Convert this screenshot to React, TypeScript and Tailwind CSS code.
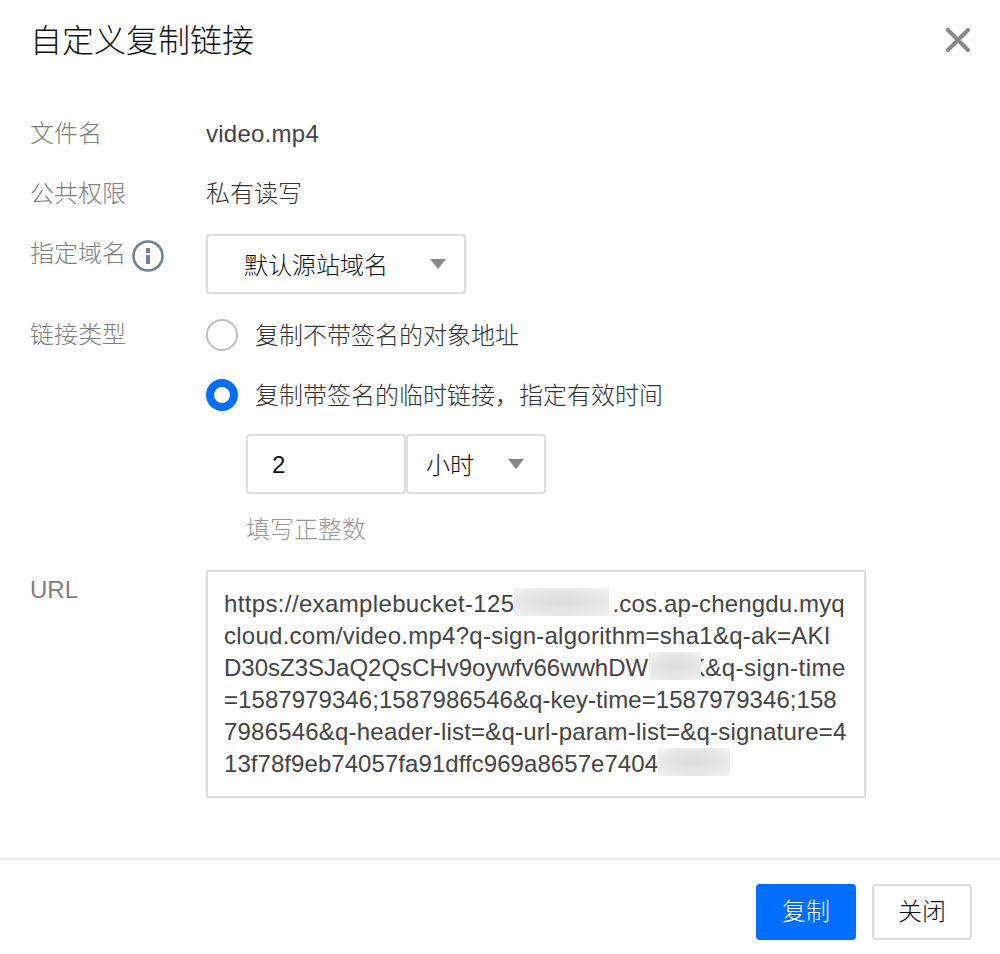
const FONT = "font-['Liberation_Sans','Noto_Sans_CJK_SC',sans-serif]";

function Caret() {
  return (
    <svg width="16" height="10" viewBox="0 0 16 10" className="shrink-0">
      <path d="M0 0h16L8 10z" fill="#888888" />
    </svg>
  );
}

function Row({ label, top, children }: { label: React.ReactNode; top: string; children: React.ReactNode }) {
  return (
    <div className={`flex items-start pl-[30px] ${top}`}>
      <div className="w-[176px] shrink-0 h-[32px] flex items-center text-[#808080]">{label}</div>
      <div className="flex-1 min-w-0">{children}</div>
    </div>
  );
}

function Radio({ checked, children }: { checked?: boolean; children: React.ReactNode }) {
  return (
    <div className="flex items-center h-[32px] text-[#333333]">
      {checked ? (
        <span className="w-[32px] h-[32px] rounded-full border-[8px] border-[#006eff] bg-white" />
      ) : (
        <span className="w-[32px] h-[32px] rounded-full border-2 border-[#bfbfbf] bg-white" />
      )}
      <span className="ml-[17px] pt-[1px]">{children}</span>
    </div>
  );
}

// the redacted parts of the url are blurred in the screenshot
function Smudge({ className }: { className: string }) {
  return (
    <span
      className={`absolute bg-[radial-gradient(ellipse_at_center,#dcdcdc_0%,#e6e6e6_55%,#f3f3f3_100%)] ${className}`}
    />
  );
}

export default function App() {
  return (
    <div className={`w-[1000px] h-[954px] bg-white flex flex-col text-[24px] leading-[32px] font-light ${FONT}`}>
      {/* header */}
      <div className="h-[80px] pl-[30px] pr-[30px] flex items-center justify-between shrink-0">
        <div className="text-[32px] leading-[40px] pt-[2px] text-[#111111]">自定义复制链接</div>
        <svg width="24" height="24" viewBox="0 0 24 24">
          <path d="M2 2l20 20M22 2L2 22" stroke="#888888" strokeWidth="4" strokeLinecap="round" />
        </svg>
      </div>

      {/* form */}
      <div className="flex-1">
        <Row label="文件名" top="pt-[38px]">
          <div className="text-[#444444] tracking-[0.25px]">video.mp4</div>
        </Row>
        <Row label="公共权限" top="pt-[28px]">
          <div className="text-[#333333]">私有读写</div>
        </Row>
        <Row
          label={
            <span className="flex items-center">
              指定域名
              <svg width="32" height="32" viewBox="0 0 32 32" className="ml-[6px] mt-[3px]">
                <circle cx="16" cy="16" r="14.5" fill="none" stroke="#6f8199" strokeWidth="2.5" />
                <rect x="14" y="8" width="4" height="5" fill="#6f8199" />
                <rect x="14" y="15" width="4" height="9" fill="#6f8199" />
              </svg>
            </span>
          }
          top="pt-[28px]"
        >
          <div className="-mt-[4px] w-[260px] h-[60px] border-2 border-[#dddddd] rounded-[4px] flex items-center justify-between pl-[36px] pr-[18px] text-[#111111]">
            <span className="pt-[4px]">默认源站域名</span>
            <Caret />
          </div>
        </Row>
        <Row label="链接类型" top="pt-[25px]">
          <Radio>复制不带签名的对象地址</Radio>
          <div className="mt-[28px]">
            <Radio checked>复制带签名的临时链接，指定有效时间</Radio>
          </div>
          <div className="mt-[23px] ml-[40px] flex">
            <div className="w-[160px] h-[60px] border-2 border-[#dde1e6] rounded-[4px] flex items-center pl-[24px] pt-[1px] text-[#111111]">
              2
            </div>
            <div className="w-[140px] h-[60px] border-2 border-[#dde1e6] rounded-[4px] flex items-center justify-between pl-[18px] pr-[20px] text-[#111111]">
              <span className="pt-[4px]">小时</span>
              <Caret />
            </div>
          </div>
          <div className="mt-[20px] ml-[40px] text-[#999999]">填写正整数</div>
        </Row>
        <Row label="URL" top="pt-[28px]">
          <div className="-mt-[4px] w-[660px] h-[228px] border-2 border-[#dddddd] pl-[16px] pt-[16px] text-[#444444] whitespace-nowrap">
            <div className="relative">
              <span className="tracking-[0.36px]">https://examplebucket-125</span>
              <span className="inline-block w-[98px]" />
              <span className="tracking-[0.15px]">.cos.ap-chengdu.myq</span>
              <Smudge className="left-[290px] top-0 w-[95px] h-[28px]" />
            </div>
            <div className="tracking-[0.26px]">cloud.com/video.mp4?q-sign-algorithm=sha1&amp;q-ak=AKI</div>
            <div className="relative">
              D30sZ3SJaQ2QsCHv9oywfv66wwhDW
              <span className="inline-block w-[41px]" />
              K<span className="tracking-[0.5px]">&amp;q-sign-time</span>
              <Smudge className="left-[425px] top-0 w-[52px] h-[28px]" />
            </div>
            <div className="tracking-[0.06px]">=1587979346;1587986546&amp;q-key-time=1587979346;158</div>
            <div className="tracking-[0.2px]">7986546&amp;q-header-list=&amp;q-url-param-list=&amp;q-signature=4</div>
            <div className="relative tracking-[0.06px]">
              13f78f9eb74057fa91dffc969a8657e7404
              <Smudge className="left-[434px] top-0 w-[72px] h-[28px]" />
            </div>
          </div>
        </Row>
      </div>

      {/* footer */}
      <div className="h-[96px] border-t-2 border-[#eeeeee] flex items-start justify-end gap-[16px] pt-[24px] pr-[28px] shrink-0">
        <button className="w-[100px] h-[56px] rounded-[4px] bg-[#006eff] text-white">复制</button>
        <button className="w-[100px] h-[56px] rounded-[4px] border-2 border-[#dddddd] bg-white text-[#111111]">关闭</button>
      </div>
    </div>
  );
}
